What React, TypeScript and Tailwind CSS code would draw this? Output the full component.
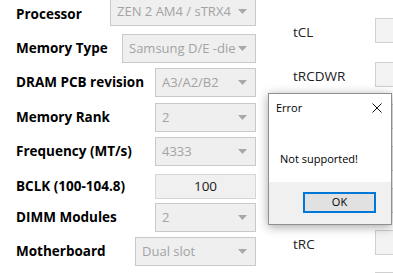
import React from 'react';

const font = { fontFamily: '"Open Sans", "Noto Sans", sans-serif' };

type Row = {
  label: string;
  value: string;
  boxW: string;
  mt: string;
  kind?: 'select' | 'input';
  labelCls?: string;
};

const rows: Row[] = [
  { label: 'Processor', value: 'ZEN 2 AM4 / sTRX4', boxW: 'w-[146px]', mt: 'mt-[-3px]', labelCls: 'mt-[6px]' },
  { label: 'Memory Type', value: 'Samsung D/E -die', boxW: 'w-[134px]', mt: 'mt-[8px]' },
  { label: 'DRAM PCB revision', value: 'A3/A2/B2', boxW: 'w-[101px]', mt: 'mt-[5px]' },
  { label: 'Memory Rank', value: '2', boxW: 'w-[101px]', mt: 'mt-[6px]' },
  { label: 'Frequency (MT/s)', value: '4333', boxW: 'w-[101px]', mt: 'mt-[5px]' },
  { label: 'BCLK (100-104.8)', value: '100', boxW: 'w-[101px]', mt: 'mt-[6px]', kind: 'input' },
  { label: 'DIMM Modules', value: '2', boxW: 'w-[101px]', mt: 'mt-[2px]' },
  { label: 'Motherboard', value: 'Dual slot', boxW: 'w-[121px]', mt: 'mt-[5px]' },
];

// rows hidden behind the dialog or below the fold keep their boxes only
const timings = ['tCL', 'tRCDWR', '', '', '', 'tRC', ''];

function Arrow() {
  return (
    <svg width="9" height="5" viewBox="0 0 9 5" className="shrink-0">
      <path d="M0 0 H9 L4.5 5 Z" fill="#a8a8a8" />
    </svg>
  );
}

function SelectBox({ row }: { row: Row }) {
  if (row.kind === 'input') {
    return (
      <div className={`${row.boxW} h-[25px] border border-[#d6d6d6] bg-[#f0f0f0] flex items-center justify-center text-[13.5px] text-[#1a1a1a]`}>
        {row.value}
      </div>
    );
  }
  return (
    <div className={`${row.boxW} h-[29px] border border-[#c9c9c9] bg-[#efefef] flex items-center pl-[6px] pr-[8px]`}>
      <span className="flex-1 overflow-hidden whitespace-nowrap text-[13px] text-[#a3a3a3]">{row.value}</span>
      <Arrow />
    </div>
  );
}

export default function App() {
  return (
    <div className="relative w-[393px] h-[273px] overflow-hidden bg-white flex" style={font}>
      <div className="w-[256px] pl-[16px] flex flex-col shrink-0">
        {rows.map((r) => (
          <div key={r.label} className={`flex items-center justify-between h-[29px] ${r.mt}`}>
            <span className={`text-[13.5px] font-bold text-black whitespace-nowrap ${r.labelCls ?? ''}`}>{r.label}</span>
            <SelectBox row={r} />
          </div>
        ))}
      </div>

      <div className="ml-[37px] pt-[18px] flex flex-col gap-[17px] shrink-0">
        {timings.map((t, i) => (
          <div key={i} className={`flex items-center h-[25px] ${i === 1 ? 'mt-[2px]' : ''}`}>
            <span className="w-[82px] text-[13.5px] text-[#222] mt-[3px]">{t}</span>
            <div className="w-[60px] h-[25px] border border-[#d0d0d0] bg-[#f3f3f3]" />
          </div>
        ))}
      </div>

      <div className="absolute left-[268px] top-[93px] w-[124px] h-[132px] border border-[#8f8f8f] bg-white flex flex-col shadow-[0_2px_10px_rgba(0,0,0,0.35)]">
        <div className="h-[28px] pl-[7px] pr-[9px] flex items-center justify-between">
          <span className="text-[11px] text-black">Error</span>
          <svg width="10" height="10" viewBox="0 0 10 10">
            <path d="M0.5 0.5 L9.5 9.5 M9.5 0.5 L0.5 9.5" stroke="#111" strokeWidth="1" />
          </svg>
        </div>
        <div className="flex-1 pl-[11px] pt-[23px]">
          <span className="text-[11px] text-black leading-[16px]">Not supported!</span>
        </div>
        <div className="h-[42px] bg-[#f0f0f0] flex justify-end pt-[10px] pr-[15px]">
          <div className="w-[73px] h-[21px] border-2 border-[#0078d7] bg-[#e1e1e1] flex items-center justify-center text-[11px] text-black">
            OK
          </div>
        </div>
      </div>
    </div>
  );
}
